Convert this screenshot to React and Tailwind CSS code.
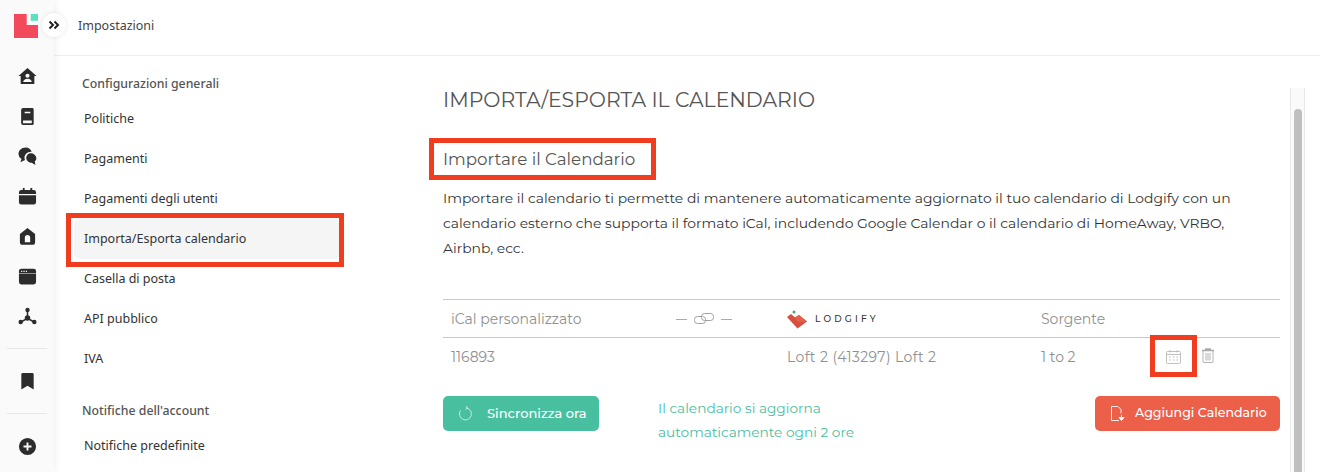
import React from "react";

const Nav = ({ children }) => (
  <svg width="19" height="19" viewBox="0 0 20 20" fill="#2c2c2c">{children}</svg>
);

const icons = {
  home: <Nav><path fillRule="evenodd" d="M10 1 19.500 9.500h-2.300V18H2.800V9.500H.5Zm0 6a2.200 2.200 0 1 0 0 4.400 2.200 2.200 0 0 0 0-4.400ZM5.500 15.800c0-2 2-3.400 4.500-3.400s4.500 1.400 4.500 3.400Z" /></Nav>,
  book: <Nav><path fillRule="evenodd" d="M5.500 1h9.500a1.500 1.500 0 0 1 1.500 1.500v15a1.500 1.500 0 0 1-1.500 1.500H5.500a2.200 2.200 0 0 1-2.200-2.200V3.200A2.200 2.200 0 0 1 5.500 1Zm1.500 4v1.500h6V5ZM5.300 14.300v2.700h9.200v-2.700Z" /></Nav>,
  chat: <Nav><path d="M8 .5c3.200 0 5.800 2 6.400 4.600C10.500 4.500 6.800 7.700 6.800 11.400c0 .9.200 1.700.6 2.400L2.500 16l1.200-3.300A6.600 6.600 0 0 1 .5 7.300C.5 3.500 4 .5 8 .5Z" /><path d="M13.300 6.500c3 0 6 2.200 6 5.300 0 1.300-.6 2.500-1.600 3.300l.6 3.900-3.800-2.300c-3 0-5.800-2.200-5.800-5S10.800 6.500 13.300 6.500Z" /></Nav>,
  calendar: <Nav><path d="M5 1h2v2.200h6V1h2v2.200h1.500A2.500 2.500 0 0 1 19 5.700V7.300H1V5.700a2.500 2.500 0 0 1 2.500-2.500H5Z" /><path d="M1 8.600h18v7.400a2.500 2.500 0 0 1-2.500 2.500h-13A2.500 2.500 0 0 1 1 16Z" /></Nav>,
  house: <Nav><path fillRule="evenodd" d="M10 1 18 7.300V16a2.700 2.700 0 0 1-2.700 2.700H4.700A2.700 2.700 0 0 1 2 16V7.300ZM10 8.500a2.800 2.800 0 0 0-2.800 2.800v4.700h5.600v-4.700A2.800 2.800 0 0 0 10 8.500Z" /></Nav>,
  browser: <Nav><path fillRule="evenodd" d="M3.500 1.800h13A2.500 2.500 0 0 1 19 4.300v11.500a2.500 2.500 0 0 1-2.500 2.500h-13A2.500 2.500 0 0 1 1 15.800V4.300a2.500 2.500 0 0 1 2.500-2.500ZM3.200 3.900v1.300h1.300V3.900Zm2.500 0v1.300H7V3.900Zm2.500 0v1.300h1.300V3.900ZM1 6.800v.6h18v-.6Z" /></Nav>,
  network: <Nav><circle cx="10" cy="3.200" r="2.300" /><circle cx="2.800" cy="15.800" r="2.300" /><circle cx="17.200" cy="15.800" r="2.300" /><circle cx="10" cy="11.700" r="2.900" /><path d="M9.200 4h1.600v6h-1.600ZM3.300 14.800l6-3.500.8 1.400-6 3.500ZM16.700 14.800l-6-3.500-.8 1.400 6 3.500Z" /></Nav>,
  bookmark: <Nav><path d="M5 1h10a1.500 1.500 0 0 1 1.500 1.500V18.500L10 14.500l-6.500 4V2.500A1.500 1.500 0 0 1 5 1Z" /></Nav>,
  plus: <Nav><path fillRule="evenodd" d="M10 1a9 9 0 1 1 0 18 9 9 0 0 1 0-18ZM9 5.800v3.200H5.800v2H9v3.200h2V11h3.200V9H11V5.800Z" /></Nav>,
};

const RailIcon = ({ name }) => <div className="flex h-10 items-center justify-center">{icons[name]}</div>;

const MenuItem = ({ children, active }) => (
  <div className={`flex h-10 items-center text-[12.500px] text-[#333] ${active ? "ml-1 rounded-md bg-[#f5f5f5] pl-[10px]" : "pl-[14px]"}`}>{children}</div>
);

const gotham = { fontFamily: "Montserrat, 'Open Sans', 'Noto Sans', sans-serif" };

export default function App() {
  return (
    <div className="flex h-[472px] w-[1320px] overflow-hidden bg-white font-['Noto_Sans',sans-serif]">
      <aside className="relative z-10 flex w-[54px] shrink-0 flex-col items-center bg-[#fafafa] shadow-[2px_0_6px_rgba(0,0,0,0.06)]">
        <div className="flex h-[56px] w-full items-start pl-[14px] pt-[14px]">
          <svg width="24" height="24" viewBox="0 0 24 24">
            <path d="M0 0h12.700v11H24v13H0Z" fill="#f2495c" />
            <rect x="16.700" y="0" width="7.300" height="6.800" fill="#5ce0bd" />
          </svg>
        </div>
        <div className="absolute left-[42px] top-[13px] flex h-6 w-6 items-center justify-center rounded-full bg-white shadow-[0_0_4px_rgba(0,0,0,0.1)]">
          <svg width="12" height="12" viewBox="0 0 12 12" fill="none" stroke="#222" strokeWidth="2">
            <path d="M1.500 2.500 5 6 1.500 9.500M6.500 2.500 10 6 6.500 9.500" />
          </svg>
        </div>
        <div className="flex flex-col">
          <RailIcon name="home" />
          <RailIcon name="book" />
          <RailIcon name="chat" />
          <RailIcon name="calendar" />
          <RailIcon name="house" />
          <RailIcon name="browser" />
          <RailIcon name="network" />
        </div>
        <div className="mt-[12px] h-px w-10 bg-[#e6e6e6]" />
        <div className="mt-[12px]"><RailIcon name="bookmark" /></div>
        <div className="mt-[12px] h-px w-10 bg-[#e6e6e6]" />
        <div className="mt-[12px]"><RailIcon name="plus" /></div>
      </aside>

      <div className="flex min-w-0 flex-1 flex-col">
        <header className="flex h-[56px] shrink-0 items-center border-b border-[#eeeeee] pb-[2px] pl-6 text-[12.500px] text-[#444]">
          Impostazioni
        </header>
        <div className="flex min-h-0 flex-1">
          <nav className="w-[389px] shrink-0 pl-[16px] pt-[16px]">
            <div className="h-[27px] pl-3 text-[12.300px] font-medium leading-[24px] text-[#555]">Configurazioni generali</div>
            <div className="w-[270px]">
              <MenuItem>Politiche</MenuItem>
              <MenuItem>Pagamenti</MenuItem>
              <MenuItem>Pagamenti degli utenti</MenuItem>
              <div className="relative">
                <MenuItem active>Importa/Esporta calendario</MenuItem>
                <div className="pointer-events-none absolute -left-[4px] -top-[6px] h-[54px] w-[278px] border-[5px] border-[#f03c1f]" />
              </div>
              <MenuItem>Casella di posta</MenuItem>
              <MenuItem>API pubblico</MenuItem>
              <MenuItem>IVA</MenuItem>
            </div>
            <div className="mt-[20px] h-[22px] pl-3 text-[12.300px] font-medium leading-[24px] text-[#555]">Notifiche dell'account</div>
            <div className="w-[270px]"><div className="mt-[5px]"><MenuItem>Notifiche predefinite</MenuItem></div></div>
          </nav>

          <main className="min-w-0 flex-1" style={gotham}>
            <div className="w-[837px] pt-[31px]">
              <h1 className="text-[20.400px] font-normal leading-[26px] text-[#555]">IMPORTA/ESPORTA IL CALENDARIO</h1>
              <div className="relative mt-[35px] w-fit">
                <h2 className="text-[16.700px] font-normal leading-[22px] text-[#555]">Importare il Calendario</h2>
                <div className="pointer-events-none absolute -left-[14px] -top-[10px] -right-[21px] -bottom-[10px] border-[5px] border-[#f03c1f]" />
              </div>
              <p className="mt-[16px] w-[800px] text-[13.900px] leading-[25px] text-[#333]">
                Importare il calendario ti permette di mantenere automaticamente aggiornato il tuo calendario di Lodgify con un calendario esterno che supporta il formato iCal, includendo Google Calendar o il calendario di HomeAway, VRBO, Airbnb, ecc.
              </p>
              <div className="mt-[38px] border-t border-[#c8c8c8]">
                <div className="flex h-[38px] items-center border-b border-[#c8c8c8] pt-[1px] text-[14px] text-[#909090]">
                  <div className="w-[233px] pl-2">iCal personalizzato</div>
                  <div className="flex w-[111px] items-center gap-[7px] text-[#aaa]">
                    <span className="h-px w-[11px] bg-[#aaa]" />
                    <svg width="20" height="12" viewBox="0 0 20 12" fill="none" stroke="#a0a0a0"><rect x="0.500" y="3.500" width="11" height="7" rx="3" /><rect x="7.500" y="0.500" width="12" height="7" rx="3" /></svg>
                    <span className="h-px w-[11px] bg-[#aaa]" />
                  </div>
                  <div className="flex w-[254px] items-center gap-[8px]">
                    <svg width="20" height="20" viewBox="0 0 20 20">
                      <circle cx="7" cy="3" r="1.500" fill="#46a86c" />
                      <path d="M0 8 4 5 8 8.500 12 6 20 12.500 10.500 19.500Z" fill="#d94f3d" />
                      <path d="M8 8.500 12 6 20 12.500 10.500 13Z" fill="#e2604c" />
                    </svg>
                    <span className="text-[9px] font-medium tracking-[3.200px] text-[#333]">LODGIFY</span>
                  </div>
                  <div className="w-[110px]">Sorgente</div>
                </div>
                <div className="flex h-[38px] items-center text-[14px] text-[#909090]">
                  <div className="w-[344px] pl-2">116893</div>
                  <div className="w-[254px] tracking-[0.400px]">Loft 2 (413297) Loft 2</div>
                  <div className="w-[125px]">1 to 2</div>
                  <div className="relative flex items-center">
                    <svg width="15" height="14" viewBox="0 0 15 14" fill="none" stroke="#b8b8b8" strokeWidth="0.900">
                      <rect x="0.500" y="1.500" width="14" height="12" rx="1" />
                      <path d="M0.500 4.500h14M4 0v2.500M11 0v2.500" />
                      <path d="M3 7h1.500M6.800 7h1.500M10.500 7h1.500M3 10h1.500M6.800 10h1.500M10.500 10h1.500" strokeWidth="1.200" />
                    </svg>
                    <div className="pointer-events-none absolute -left-[16px] -top-[15px] h-[42px] w-[47px] border-[5px] border-[#f03c1f]" />
                    <svg className="-mt-[4px] ml-[20px]" width="14" height="15" viewBox="0 0 14 15" fill="none" stroke="#aaa">
                      <path d="M1 2.500h12M4 1h6" strokeWidth="1.500" />
                      <path d="M2 3v10.500a1 1 0 0 0 1 1h8a1 1 0 0 0 1-1V3M5 5v7.500M7 5v7.500M9 5v7.500" strokeWidth="0.900" />
                    </svg>
                  </div>
                </div>
              </div>
              <div className="mt-[20px] flex items-start">
                <button className="flex h-[35px] w-[156px] items-center rounded-[5px] bg-[#48c0a0] pl-[15px] text-[13px] font-medium text-white">
                  <svg width="15" height="15" viewBox="0 0 15 15" fill="none" stroke="#dff5ee" strokeWidth="0.800">
                    <path d="M8.500 2a6 6 0 1 1-6 2.500" />
                    <path d="M8 0l1.500 2L7.500 3.500" />
                  </svg>
                  <span className="ml-[14px]">Sincronizza ora</span>
                </button>
                <div className="ml-[59px] text-[13.700px] leading-[24px] text-[#48c0a0]">
                  Il calendario si aggiorna
                  <br />
                  automaticamente ogni 2 ore
                </div>
                <button className="ml-auto flex h-[35px] w-[185px] items-center rounded-[5px] bg-[#ec604a] pl-[15px] text-[12.600px] font-medium text-white">
                  <svg width="15" height="15" viewBox="0 0 15 15" fill="none" stroke="#fff" strokeWidth="0.900">
                    <path d="M9 14.500H1.500V0.500H8l3 3v4" />
                    <path d="M11.500 9v3M9 11.500h5l-2.500 3Z" fill="#fff" />
                  </svg>
                  <span className="ml-[10px]">Aggiungi Calendario</span>
                </button>
              </div>
            </div>
          </main>

          <div className="mr-[15px] mt-[32px] flex w-[15px] shrink-0 justify-center border-x border-[#e8e8e8] bg-[#fafafa]">
            <div className="mt-[21px] h-full w-[8px] rounded-full bg-[#c0c0c0]" />
          </div>
        </div>
      </div>
    </div>
  );
}
